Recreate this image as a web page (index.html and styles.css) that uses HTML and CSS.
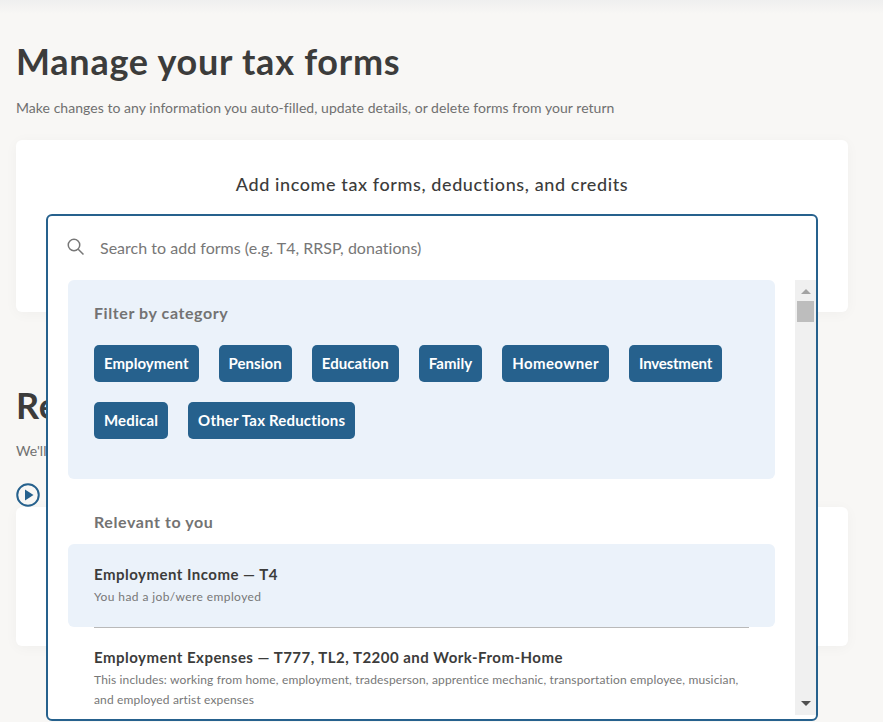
FILE: index.html
```html
<!DOCTYPE html>
<html lang="en">
<head>
    <meta charset="UTF-8">
    <meta name="viewport" content="width=device-width, initial-scale=1.0">
    <title>Manage your tax forms</title>
    <link rel="stylesheet" href="styles.css">
</head>
<body>

    <div class="page">
        <h1>Manage your tax forms</h1>
        <p class="subtitle">Make changes to any information you auto-filled, update details, or delete forms from your return</p>

        <div class="card add-card">
            <h2>Add income tax forms, deductions, and credits</h2>

            <div class="dropdown">
                <div class="search-row">
                    <svg class="search-icon" width="18" height="18" viewBox="0 0 18 18" fill="none" stroke="#777" stroke-width="1.5">
                        <circle cx="7" cy="7" r="5.75"/>
                        <path d="M11.2 11.2l5.3 5.3"/>
                    </svg>
                    <span class="placeholder">Search to add forms (e.g. T4, RRSP, donations)</span>
                </div>

                <div class="dropdown-body">
                    <div class="results">
                        <div class="filter-panel">
                            <h3>Filter by category</h3>
                            <div class="chips">
                                <span class="chip">Employment</span>
                                <span class="chip">Pension</span>
                                <span class="chip">Education</span>
                                <span class="chip">Family</span>
                                <span class="chip chip-wide">Homeowner</span>
                                <span class="chip chip-tight">Investment</span>
                                <span class="chip chip-loose">Medical</span>
                                <span class="chip chip-loose">Other Tax Reductions</span>
                            </div>
                        </div>

                        <h3 class="relevant-title">Relevant to you</h3>

                        <div class="result-item active">
                            <div class="item-title">Employment Income — T4</div>
                            <div class="item-desc">You had a job/were employed</div>
                        </div>
                        <div class="result-item">
                            <div class="item-title">Employment Expenses — T777, TL2, T2200 and Work-From-Home</div>
                            <div class="item-desc">This includes: working from home, employment, tradesperson, apprentice mechanic, transportation employee, musician, and employed artist expenses</div>
                        </div>
                    </div>

                    <div class="scrollbar">
                        <div class="arrow-up"></div>
                        <div class="thumb"></div>
                        <div class="arrow-down"></div>
                    </div>
                </div>
            </div>
        </div>

        <h1 class="review-title">Re</h1>
        <p class="subtitle review-sub">We'll</p>
        <div class="play-row">
            <svg width="24" height="24" viewBox="0 0 24 24">
                <circle cx="12" cy="12" r="10.75" fill="none" stroke="#26618d" stroke-width="2"/>
                <path d="M9 6.5v11l8.5-5.5z" fill="#26618d"/>
            </svg>
        </div>
        <div class="card review-card"></div>
    </div>

</body>
</html>
```

FILE: styles.css
```css
* {
    box-sizing: border-box;
}

body {
    font-family: 'Lato', sans-serif;
    margin: 0;
    height: 100vh;
    overflow: hidden;
    background-color: #f8f7f5;
    color: #3c3c3b;
}

.page {
    padding: 39px 35px 0 16px;
    background: linear-gradient(#efefef, #f8f7f5 14px);
    height: 100%;
}

h1 {
    margin: 0;
    font-size: 36px;
    line-height: 44px;
    font-weight: 700;
    letter-spacing: 0.75px;
}

.subtitle {
    margin: 14px 0 0;
    font-size: 14px;
    line-height: 22px;
    letter-spacing: 0.04px;
    color: #707070;
}

.card {
    background-color: #fff;
    border-radius: 6px;
    box-shadow: 0 2px 14px rgba(0, 0, 0, 0.035);
}

.add-card {
    position: relative;
    height: 172px;
    margin-top: 21px;
    padding-top: 32px;
}

.add-card h2 {
    margin: 0;
    text-align: center;
    font-size: 18px;
    line-height: 24px;
    font-weight: 500;
    letter-spacing: 0.6px;
}

.dropdown {
    position: absolute;
    top: 74px;
    left: 30px;
    width: 772px;
    height: 507px;
    background-color: #fff;
    border: 2px solid #26618d;
    border-radius: 6px;
    overflow: hidden;
}

.search-row {
    display: flex;
    align-items: center;
    height: 64px;
    padding: 0 0 2px 19px;
}

.search-icon {
    margin-right: 15px;
}

.placeholder {
    font-size: 16px;
    letter-spacing: 0.02px;
    color: #777;
}

.dropdown-body {
    display: flex;
    height: 435px;
}

.results {
    width: 747px;
    padding-left: 20px;
    overflow: hidden;
}

.filter-panel {
    height: 199px;
    width: 707px;
    padding: 22px 26px 0;
    background-color: #ebf2fa;
    border-radius: 6px;
}

h3 {
    margin: 0;
    font-size: 16px;
    line-height: 22px;
    font-weight: 700;
    letter-spacing: 0.58px;
    color: #737373;
}

.chips {
    display: flex;
    flex-wrap: wrap;
    gap: 20px;
    margin-top: 21px;
}

.chip {
    height: 37px;
    padding: 0 10px;
    line-height: 37px;
    font-size: 15px;
    font-weight: 700;
    letter-spacing: 0.05px;
    color: #fff;
    background-color: #26618d;
    border-radius: 5px;
}

.chip-wide {
    letter-spacing: 0.42px;
}

.chip-tight {
    letter-spacing: -0.2px;
}

.chip-loose {
    letter-spacing: 0.18px;
}

.relevant-title {
    margin: 32px 0 11px 26px;
}

.result-item {
    width: 707px;
    padding: 20px 26px 0;
}

.result-item.active {
    height: 83px;
    background-color: #ebf2fa;
    border-radius: 6px;
    position: relative;
}

.result-item.active::after {
    content: "";
    position: absolute;
    left: 26px;
    right: 26px;
    bottom: -1px;
    height: 1px;
    background-color: #b9b9b9;
}

.item-title {
    font-size: 15px;
    line-height: 20px;
    font-weight: 700;
    letter-spacing: 0.48px;
}

.item-desc {
    margin-top: 3px;
    font-size: 12px;
    line-height: 20px;
    letter-spacing: 0.15px;
    color: #777;
}

.active .item-desc {
    letter-spacing: 0.4px;
}

.scrollbar {
    display: flex;
    flex-direction: column;
    align-items: center;
    width: 21px;
    background-color: #f0f0f0;
}

.arrow-up {
    width: 0;
    margin: 9px 0 7px;
    border-left: 5px solid transparent;
    border-right: 5px solid transparent;
    border-bottom: 5px solid #a3a3a3;
}

.thumb {
    width: 17px;
    height: 21px;
    background-color: #bdbdbd;
}

.arrow-down {
    width: 0;
    margin-top: auto;
    margin-bottom: 9px;
    border-left: 5px solid transparent;
    border-right: 5px solid transparent;
    border-top: 5px solid #505050;
}

.review-title {
    margin-top: 71px;
}

.review-sub {
    margin-top: 13px;
}

.play-row {
    height: 24px;
    margin-top: 21px;
}

.review-card {
    height: 139px;
}
```
